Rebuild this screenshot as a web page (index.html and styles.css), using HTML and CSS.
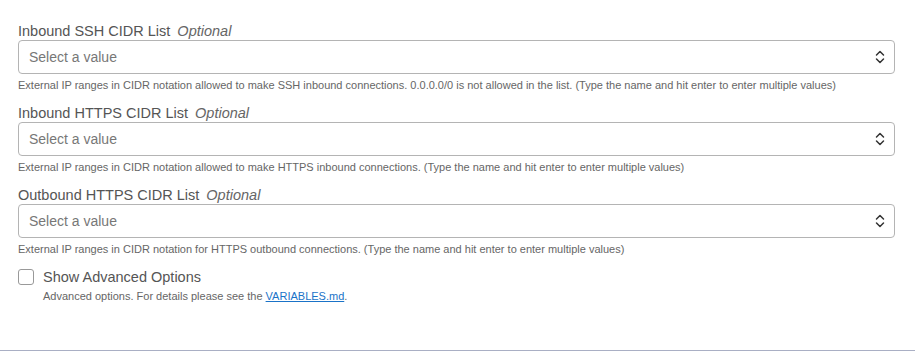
FILE: index.html
```html
<!DOCTYPE html>
<html>
<head>
    <title>Network Settings</title>
    <link rel="stylesheet" href="styles.css">
</head>
<body>
    <div class="form">
        <div class="field">
            <label class="field-label">Inbound SSH CIDR List <em>Optional</em></label>
            <div class="select">
                <span class="placeholder">Select a value</span>
                <svg class="chevron" width="10" height="14" viewBox="0 0 10 14"><path d="M1.5 5 L5 1.5 L8.5 5 M1.5 9 L5 12.5 L8.5 9" fill="none" stroke="#333" stroke-width="1.5" stroke-linecap="round" stroke-linejoin="round"/></svg>
            </div>
            <div class="help">External IP ranges in CIDR notation allowed to make SSH inbound connections. 0.0.0.0/0 is not allowed in the list. (Type the name and hit enter to enter multiple values)</div>
        </div>
        <div class="field">
            <label class="field-label">Inbound HTTPS CIDR List <em>Optional</em></label>
            <div class="select">
                <span class="placeholder">Select a value</span>
                <svg class="chevron" width="10" height="14" viewBox="0 0 10 14"><path d="M1.5 5 L5 1.5 L8.5 5 M1.5 9 L5 12.5 L8.5 9" fill="none" stroke="#333" stroke-width="1.5" stroke-linecap="round" stroke-linejoin="round"/></svg>
            </div>
            <div class="help">External IP ranges in CIDR notation allowed to make HTTPS inbound connections. (Type the name and hit enter to enter multiple values)</div>
        </div>
        <div class="field">
            <label class="field-label">Outbound HTTPS CIDR List <em>Optional</em></label>
            <div class="select">
                <span class="placeholder">Select a value</span>
                <svg class="chevron" width="10" height="14" viewBox="0 0 10 14"><path d="M1.5 5 L5 1.5 L8.5 5 M1.5 9 L5 12.5 L8.5 9" fill="none" stroke="#333" stroke-width="1.5" stroke-linecap="round" stroke-linejoin="round"/></svg>
            </div>
            <div class="help">External IP ranges in CIDR notation for HTTPS outbound connections. (Type the name and hit enter to enter multiple values)</div>
        </div>
        <div class="check-row">
            <span class="checkbox"></span>
            <div>
                <div class="check-label">Show Advanced Options</div>
                <div class="check-help">Advanced options. For details please see the <a href="#">VARIABLES.md</a>.</div>
            </div>
        </div>
    </div>
</body>
</html>
```

FILE: styles.css
```css
body {
    margin: 0;
    font-family: "Liberation Sans", Arial, sans-serif;
    background: #fff;
}
.form {
    height: 351px;
    box-sizing: border-box;
    padding: 22px 20px 0 18px;
    border-bottom: 1px solid #a9afc4;
}
.field {
    margin-bottom: 12px;
}
.field-label {
    display: block;
    font-size: 14.5px;
    line-height: 18px;
    color: #555;
}
.field-label em {
    margin-left: 3px;
    color: #666;
}
.select {
    height: 34px;
    box-sizing: border-box;
    border: 1px solid #b4b4b4;
    border-radius: 4px;
    display: flex;
    align-items: center;
    justify-content: space-between;
    padding: 0 9px 0 10px;
}
.placeholder {
    font-size: 14px;
    color: #777;
}
.help {
    margin-top: 4px;
    font-size: 11px;
    line-height: 14px;
    color: #666;
}
.check-row {
    display: flex;
    gap: 9px;
    margin-top: 1px;
}
.checkbox {
    width: 16px;
    height: 16px;
    box-sizing: border-box;
    border: 1px solid #999;
    border-radius: 3px;
    margin-top: 1px;
}
.check-label {
    font-size: 14.5px;
    line-height: 18px;
    color: #555;
}
.check-help {
    font-size: 11px;
    line-height: 16px;
    color: #666;
    margin-top: 2px;
}
.check-help a {
    color: #1a73c8;
}
```
